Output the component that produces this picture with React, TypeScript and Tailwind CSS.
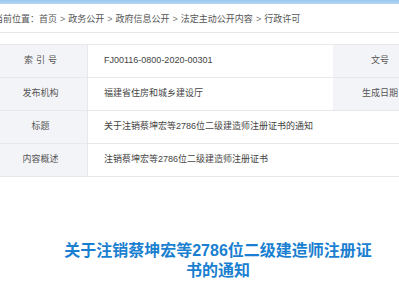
import React from "react";

const crumbs = ["首页", "政务公开", "政府信息公开", "法定主动公开内容", "行政许可"];

const App: React.FC = () => {
  return (
    <div
      className="w-[399px] h-[300px] overflow-hidden bg-white"
      style={{ fontFamily: '"Liberation Sans", "Noto Sans CJK SC", sans-serif' }}
    >
      {/* 顶部蓝条 */}
      <div className="h-[4px] bg-gradient-to-b from-[#9ac8ee] to-[#b5d7f3]" />

      <div className="-ml-[6px] w-[460px]">
        {/* 面包屑 */}
        <div className="h-[29px] border-b border-[#e6e6e6] flex items-center pt-[4px] text-[9px] text-[#555] whitespace-nowrap">
          <span>当前位置：</span>
          {crumbs.map((c, i) => (
            <React.Fragment key={c}>
              {i > 0 && <span className="mx-[3px] text-[#777]">&gt;</span>}
              <span>{c}</span>
            </React.Fragment>
          ))}
        </div>

        {/* 信息表 */}
        <div className="mt-[11px] border-t border-[#e8e8e8] text-[9px]">
          <div className="flex h-[33px] border-b border-[#e8e8e8]">
            <div className="w-[94px] shrink-0 bg-[#f3f4f8] border-r border-[#e8e8e8] flex items-center justify-center text-[#555] tracking-[3px] pl-[3px]">
              索引号
            </div>
            <div className="w-[245px] shrink-0 flex items-center pl-[16px] text-[#444]">
              FJ00116-0800-2020-00301
            </div>
            <div className="w-[94px] shrink-0 bg-[#f3f4f8] flex items-center justify-center text-[#555]">
              文号
            </div>
            <div className="flex-1" />
          </div>
          <div className="flex h-[33px] border-b border-[#e8e8e8]">
            <div className="w-[94px] shrink-0 bg-[#f3f4f8] border-r border-[#e8e8e8] flex items-center justify-center text-[#555]">
              发布机构
            </div>
            <div className="w-[245px] shrink-0 flex items-center pl-[16px] text-[#444]">
              福建省住房和城乡建设厅
            </div>
            <div className="w-[94px] shrink-0 bg-[#f3f4f8] flex items-center justify-center text-[#555]">
              生成日期
            </div>
            <div className="flex-1" />
          </div>
          <div className="flex h-[33px] border-b border-[#e8e8e8]">
            <div className="w-[94px] shrink-0 bg-[#f3f4f8] border-r border-[#e8e8e8] flex items-center justify-center text-[#555]">
              标题
            </div>
            <div className="flex-1 flex items-center pl-[16px] text-[#444]">
              关于注销蔡坤宏等2786位二级建造师注册证书的通知
            </div>
          </div>
          <div className="flex h-[33px] border-b border-[#e8e8e8]">
            <div className="w-[94px] shrink-0 bg-[#f3f4f8] border-r border-[#e8e8e8] flex items-center justify-center text-[#555]">
              内容概述
            </div>
            <div className="flex-1 flex items-center pl-[16px] text-[#444]">
              注销蔡坤宏等2786位二级建造师注册证书
            </div>
          </div>
        </div>
      </div>

      {/* 标题 */}
      <h1 className="mt-[64px] ml-[60px] w-[316px] text-center text-[16px] leading-[20px] font-bold text-[#1a7fd0]">
        关于注销蔡坤宏等2786位二级建造师注册证书的通知
      </h1>
    </div>
  );
};

export default App;
